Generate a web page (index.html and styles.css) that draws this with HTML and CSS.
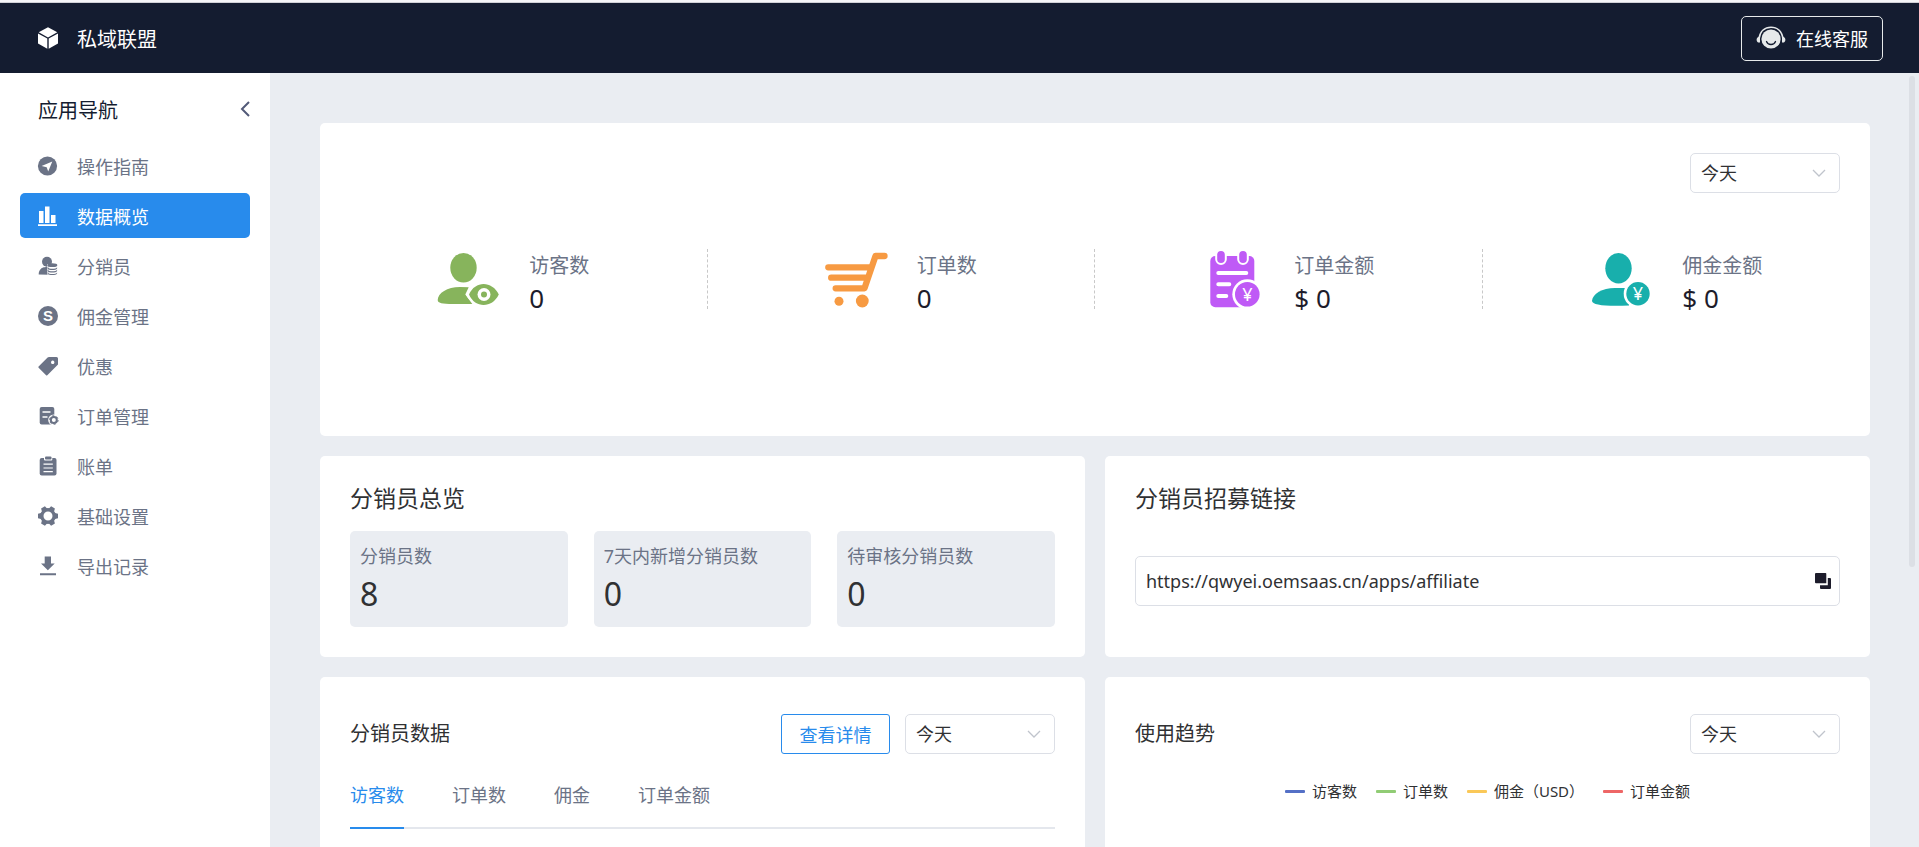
FILE: index.html
```html
<!DOCTYPE html>
<html lang="zh-CN">
<head>
<meta charset="utf-8">
<title>私域联盟</title>
<link rel="stylesheet" href="styles.css">
</head>
<body>
<header class="topbar">
  <div class="brand">
    <svg class="icon" viewBox="0 0 20 22" aria-hidden="true"><path fill="#fff" d="M10 .3 19.3 5.300 10 10.400.7 5.300ZM0 6.500l9.300 5v10.200L0 16.500ZM20 6.500l-9.300 5v10.200L20 16.500Z"/></svg>
    <span>私域联盟</span>
  </div>
  <button class="support" type="button">
    <svg class="support-icon" viewBox="0 0 30 24" aria-hidden="true"><circle cx="15" cy="13" r="9.600" fill="#e6e9ea"/><path d="M3 13C4 5 9 1.200 15 1.200S26 5 27 13" fill="none" stroke="#e6e9ea" stroke-width="1.600"/><path d="M4 10.500v6C1.800 17 .6 15.500.6 13.700S2 10.500 4 10.500ZM26 10.500v6c2.200.5 3.400-1 3.400-2.800S28 10.500 26 10.500Z" fill="#e6e9ea"/><path d="M10.500 15.500c1.500 4 7.500 4 9 0" fill="none" stroke="#141c30" stroke-width="1.300" stroke-linecap="round"/></svg>
    <span>在线客服</span>
  </button>
</header>
<div class="shell">
  <aside class="sidebar">
    <div class="sidebar-head">
      <h2 class="sidebar-title">应用导航</h2>
      <button class="collapse" type="button" aria-label="收起"><svg viewBox="0 0 10 16" width="10" height="16"><path d="M9 1 2 8l7 7" fill="none" stroke="#525a78" stroke-width="2"/></svg></button>
    </div>
    <nav class="menu">
      <a class="menu-item" href="#"><svg class="icon" viewBox="0 0 20 20"><circle cx="9.500" cy="10" r="9.600" fill="currentColor"/><path fill="#fff" d="M14.300 5.500 10.200 15.400 8.700 11.300 3.600 10Z"/></svg><span>操作指南</span></a>
      <a class="menu-item active" href="#"><svg class="icon" viewBox="0 0 20 20"><path fill="currentColor" d="M1 5h4.500v12H1ZM7 .5h4.500V17H7ZM13 9h4.500v8H13ZM0 18.200h19V20H0Z"/></svg><span>数据概览</span></a>
      <a class="menu-item" href="#"><svg class="icon" viewBox="0 0 20 20"><circle cx="9" cy="5.800" r="5" fill="currentColor"/><path fill="currentColor" d="M.7 18.500C.7 14 3.500 11.300 7 11.300l4-1.500v8.900Z"/><path d="M9 8v10c0 2.500 11 2.500 11 0V8Z" fill="#fff" fill-opacity=".75"/><ellipse cx="14.300" cy="9.200" rx="5" ry="1.900" fill="currentColor"/><path d="M9.600 11.200c1 2 8.600 2 9.500 0v1.200c-1 2-8.500 2-9.500 0ZM9.600 13.800c1 2 8.600 2 9.500 0V15c-1 2-8.500 2-9.500 0ZM9.600 16.400c1 2 8.600 2 9.500 0v1c-1 2-8.500 2-9.500 0Z" fill="currentColor"/></svg><span>分销员</span></a>
      <a class="menu-item" href="#"><svg class="icon" viewBox="0 0 20 20"><circle cx="10" cy="10" r="10" fill="currentColor"/><text x="10" y="15.200" class="coin-mark">S</text></svg><span>佣金管理</span></a>
      <a class="menu-item" href="#"><svg class="icon" viewBox="0 0 20 20"><path fill="currentColor" fill-rule="evenodd" d="M.6 10.500 9.600 1.500Q10.200 1 11 1h7.500Q20 1 20 2.500v6L9.300 19.200q-.6.500-1.200 0l-7.500-7.500q-.6-.6 0-1.200ZM14.700 4.600a1.700 1.700 0 1 0 .01 0Z"/></svg><span>优惠</span></a>
      <a class="menu-item" href="#"><svg class="icon" viewBox="0 0 20 20"><rect x="1.700" y="1" width="14.600" height="17.500" rx="2" fill="currentColor"/><path d="M4.500 6h8M4.500 11h5" stroke="#fff" stroke-width="1.600"/><circle cx="15.800" cy="14" r="5.600" fill="#fff"/><circle cx="15.800" cy="14" r="3" fill="none" stroke="currentColor" stroke-width="2"/><circle cx="15.800" cy="14" r="4.300" fill="none" stroke="currentColor" stroke-width="1" stroke-dasharray="2.250 2.250"/></svg><span>订单管理</span></a>
      <a class="menu-item" href="#"><svg class="icon" viewBox="0 0 20 20"><rect x="1.700" y="2" width="16.800" height="17.500" rx="2" fill="currentColor"/><path d="M6 1.500v2q0 1 1 1h6.300q1 0 1-1v-2Z" fill="#fff"/><rect x="7" y=".5" width="6.500" height="3" rx="1" fill="currentColor"/><path d="M5.500 8.200h9.300M5.500 12h9.300M5.500 15.600h9.300" stroke="#fff" stroke-width="1.200"/></svg><span>账单</span></a>
      <a class="menu-item" href="#"><svg class="icon" viewBox="0 0 20 20"><circle cx="10" cy="10" r="6.200" fill="none" stroke="currentColor" stroke-width="3.400"/><g fill="currentColor"><path d="M7.800 0h4.400l1 4H6.800Z" transform="rotate(30 10 10)"/><path d="M7.800 0h4.400l1 4H6.800Z" transform="rotate(90 10 10)"/><path d="M7.800 0h4.400l1 4H6.800Z" transform="rotate(150 10 10)"/><path d="M7.800 0h4.400l1 4H6.800Z" transform="rotate(210 10 10)"/><path d="M7.800 0h4.400l1 4H6.800Z" transform="rotate(270 10 10)"/><path d="M7.800 0h4.400l1 4H6.800Z" transform="rotate(330 10 10)"/></g></svg><span>基础设置</span></a>
      <a class="menu-item" href="#"><svg class="icon" viewBox="0 0 20 20"><path fill="currentColor" d="M6.700.5H13v7h3.700L9.850 14.200 3 7.500h3.700ZM2 17.200h16v2H2Z"/></svg><span>导出记录</span></a>
    </nav>
  </aside>
  <main class="content">
    <section class="card overview">
      <div class="select-box"><select class="select" aria-label="统计时间"><option>今天</option></select><svg class="caret" viewBox="0 0 14 8"><path d="M1 1l6 6 6-6" fill="none" stroke="#c0c4cc" stroke-width="1.300"/></svg></div>
      <div class="stats">
        <div class="stat">
          <svg class="stat-icon" viewBox="0 0 62 60" fill="#87b45c"><ellipse cx="26.500" cy="18.800" rx="13.200" ry="14.800"/><path d="M.7 51C1 44 10 38 23 38l8.700.3-3.400 7.200L35.300 55H16C5 55 .7 54 .7 51Z"/><path d="M29 45.500C36 30 57 30 64 45.500 57 61 36 61 29 45.500Z" fill="#fff"/><path d="M32 45.500C38 31.500 55 31.500 61.800 45.500 55 59.500 38 59.500 32 45.500Z"/><circle cx="47" cy="45.500" r="6.500" fill="#fff"/><circle cx="47" cy="45.500" r="3"/></svg>
          <div class="stat-text"><span class="stat-label">访客数</span><span class="stat-value">0</span></div>
        </div>
        <div class="stat">
          <svg class="stat-icon" viewBox="0 0 62 60" fill="none" stroke="#f79a42" stroke-width="6.300" stroke-linecap="round" stroke-linejoin="round"><path d="M3.300 18.300H45M6.200 28.700H41M10.700 39.300H39.500L50.500 7h9"/><circle cx="14" cy="52.300" r="4.500" fill="#f79a42" stroke="none"/><circle cx="37.300" cy="52" r="6.400" fill="#f79a42" stroke="none"/></svg>
          <div class="stat-text"><span class="stat-label">订单数</span><span class="stat-value">0</span></div>
        </div>
        <div class="stat">
          <svg class="stat-icon" viewBox="0 0 62 60" fill="#bf5af6"><rect x="8.300" y="7" width="44" height="51.300" rx="5"/><g stroke="#fff" stroke-width="4" paint-order="stroke"><rect x="15.200" y="2" width="7.600" height="12" rx="3.800"/><rect x="37.200" y="2" width="7.600" height="12" rx="3.800"/></g><path d="M16.300 24h28M16.300 35.300h11M16.300 47h8" stroke="#fff" stroke-width="4" stroke-linecap="round"/><circle cx="45.300" cy="45.300" r="15" fill="#fff"/><circle cx="45.300" cy="45.300" r="12.300"/><text x="45.300" y="52" class="yen">¥</text></svg>
          <div class="stat-text"><span class="stat-label">订单金额</span><span class="stat-value">$ 0</span></div>
        </div>
        <div class="stat">
          <svg class="stat-icon" viewBox="0 0 62 60" fill="#18afac"><ellipse cx="28.500" cy="19.300" rx="13.200" ry="15.300"/><path d="M2 51.700C2.500 45 12 39 25 39h14v17.500C15 57.500 2 56 2 51.700Z"/><circle cx="48" cy="44.700" r="14.300" fill="#fff"/><circle cx="48" cy="44.700" r="11.700"/><text x="48" y="51.400" class="yen">¥</text></svg>
          <div class="stat-text"><span class="stat-label">佣金金额</span><span class="stat-value">$ 0</span></div>
        </div>
      </div>
    </section>
    <div class="grid">
      <section class="card summary">
        <h3 class="card-title">分销员总览</h3>
        <div class="tiles">
          <div class="tile"><span class="tile-label">分销员数</span><span class="tile-value">8</span></div>
          <div class="tile"><span class="tile-label">7天内新增分销员数</span><span class="tile-value">0</span></div>
          <div class="tile"><span class="tile-label">待审核分销员数</span><span class="tile-value">0</span></div>
        </div>
      </section>
      <section class="card summary">
        <h3 class="card-title">分销员招募链接</h3>
        <div class="link-box">
          <input class="link-input" type="text" readonly aria-label="分销员招募链接" value="https://qwyei.oemsaas.cn/apps/affiliate">
          <button class="copy" type="button" aria-label="复制"><svg viewBox="0 0 16 16" width="16" height="16" fill="#1d1c2b"><path d="M1 0h9.500q.8 0 .8.800v9.500H1q-1 0-1-1V1q0-1 1-1ZM12.800 5H15q1 0 1 1v9q0 1-1 1H6q-1 0-1-1v-2.700h7.800Z"/></svg></button>
        </div>
      </section>
      <section class="card data">
        <div class="data-head">
          <h3 class="data-title">分销员数据</h3>
          <button class="detail" type="button">查看详情</button>
          <div class="select-box"><select class="select" aria-label="分销员数据时间"><option>今天</option></select><svg class="caret" viewBox="0 0 14 8"><path d="M1 1l6 6 6-6" fill="none" stroke="#c0c4cc" stroke-width="1.300"/></svg></div>
        </div>
        <div class="tabs" role="tablist">
          <button class="tab selected" role="tab" aria-selected="true" type="button">访客数</button>
          <button class="tab" role="tab" type="button">订单数</button>
          <button class="tab" role="tab" type="button">佣金</button>
          <button class="tab" role="tab" type="button">订单金额</button>
        </div>
      </section>
      <section class="card data">
        <div class="data-head">
          <h3 class="data-title">使用趋势</h3>
          <div class="select-box"><select class="select" aria-label="使用趋势时间"><option>今天</option></select><svg class="caret" viewBox="0 0 14 8"><path d="M1 1l6 6 6-6" fill="none" stroke="#c0c4cc" stroke-width="1.300"/></svg></div>
        </div>
        <ul class="legend">
          <li class="legend-item visitors">访客数</li>
          <li class="legend-item orders">订单数</li>
          <li class="legend-item commission">佣金（USD）</li>
          <li class="legend-item amount">订单金额</li>
        </ul>
      </section>
    </div>
    <div class="scroll-thumb"></div>
  </main>
</div>
</body>
</html>
```
FILE: styles.css
```css
* { box-sizing: border-box; }
body {
  margin: 0;
  height: 100vh;
  padding-top: 2px;
  display: flex;
  flex-direction: column;
  overflow: hidden;
  background: #f5f5f7;
  color: #303133;
  font-family: "Noto Sans", "Noto Sans CJK SC", sans-serif;
  font-size: 18px;
}
button, input, select { font: inherit; color: inherit; }
button { background: none; border: 0; padding: 0; cursor: pointer; }
h2, h3 { margin: 0; font-weight: 400; }

.topbar {
  flex: none;
  height: 71px;
  border-top: 1px solid #d0d0d6;
  padding: 0 36px 0 38px;
  display: flex;
  align-items: center;
  justify-content: space-between;
  background: #141c30;
  color: #fff;
}
.brand { display: flex; align-items: center; gap: 19px; font-size: 20px; }
.icon { flex: none; width: 20px; height: 20px; overflow: visible; }
.brand .icon { height: 22px; }
.support {
  display: flex;
  align-items: center;
  gap: 10px;
  height: 45px;
  padding: 0 14px;
  border: 1px solid #e6e9ea;
  border-radius: 5px;
  color: #fff;
}
.support-icon { width: 30px; height: 24px; }

.shell { flex: 1; min-height: 0; display: flex; }
.sidebar { flex: none; width: 270px; padding: 20px; background: #fff; }
.sidebar-head {
  display: flex;
  justify-content: space-between;
  align-items: flex-start;
  height: 36px;
  padding-left: 18px;
}
.sidebar-title { font-size: 20px; line-height: 36px; color: #141c30; }
.collapse { display: flex; padding-top: 8px; }
.menu { display: flex; flex-direction: column; gap: 5px; padding-top: 14px; }
.menu-item {
  display: flex;
  align-items: center;
  gap: 19px;
  height: 45px;
  padding: 0 18px;
  border-radius: 5px;
  color: #6b7386;
  text-decoration: none;
}
.menu-item.active { background: #288bec; color: #fff; }
.coin-mark { font: bold 15px "Liberation Sans", sans-serif; fill: #fff; text-anchor: middle; }

.content {
  position: relative;
  flex: 1;
  min-width: 0;
  overflow: hidden;
  padding: 50px 49px 0 50px;
  background: #eaedf2;
}
.scroll-thumb {
  position: absolute;
  top: 3px;
  right: 4px;
  width: 6px;
  height: 491px;
  border-radius: 3px;
  background: #dcdfe5;
}
.card { background: #fff; border-radius: 5px; padding: 30px; }
.overview {
  display: flex;
  flex-direction: column;
  align-items: flex-end;
  gap: 56px;
  padding: 30px 0 127px;
  margin-bottom: 20px;
}
.overview .select-box { margin-right: 30px; }
.select-box { position: relative; flex: none; width: 150px; height: 40px; }
.select {
  appearance: none;
  width: 100%;
  height: 100%;
  padding: 0 10px;
  border: 1px solid #dcdfe6;
  border-radius: 5px;
  background: #fff;
}
.caret { position: absolute; right: 14px; top: 16px; width: 14px; height: 8px; pointer-events: none; }
.stats { width: 100%; display: grid; grid-template-columns: repeat(4, 1fr); }
.stat {
  display: flex;
  justify-content: center;
  gap: 30px;
  height: 60px;
  border-right: 1px dashed #c8c8c8;
}
.stat:last-child { border-right: 0; }
.stat-icon { width: 62px; height: 60px; overflow: visible; }
.stat-text { display: flex; flex-direction: column; }
.stat-label { font-size: 20px; line-height: 34px; color: #6b7386; }
.stat-value { font-size: 26px; line-height: 30px; color: #1d1c2b; }
.yen { font: 18px "Noto Sans", sans-serif; fill: #fff; text-anchor: middle; }

.grid { display: grid; grid-template-columns: 1fr 1fr; gap: 20px; }
.summary { display: flex; flex-direction: column; }
.card-title { font-size: 23px; line-height: 24px; }
.tiles { display: grid; grid-template-columns: repeat(3, 1fr); gap: 26px; padding-top: 21px; }
.tile {
  display: flex;
  flex-direction: column;
  padding: 9px 10px 11px;
  border-radius: 5px;
  background: #eaedf2;
}
.tile-label { line-height: 32px; color: #6b7386; }
.tile-value { font-size: 32px; line-height: 44px; }
.link-box {
  display: flex;
  align-items: center;
  height: 50px;
  margin-top: 46px;
  padding: 0 8px 0 10px;
  border: 1px solid #dcdfe6;
  border-radius: 5px;
}
.link-input { flex: 1; min-width: 0; padding: 0; border: 0; outline: 0; background: none; }
.copy { display: flex; }

.data { height: 460px; padding-top: 37px; }
.data-head { display: flex; align-items: center; gap: 15px; height: 40px; }
.data-title { flex: 1; font-size: 20px; line-height: 38px; }
.detail {
  width: 109px;
  height: 40px;
  border: 1px solid #288bec;
  border-radius: 3px;
  color: #288bec;
}
.tabs { display: flex; gap: 48px; margin-top: 10px; border-bottom: 2px solid #e4e7ed; }
.tab {
  height: 65px;
  margin-bottom: -2px;
  padding-bottom: 4px;
  border-bottom: 2px solid transparent;
  color: #6b7386;
}
.tab.selected { color: #288bec; border-bottom-color: #288bec; }
.legend {
  display: flex;
  justify-content: center;
  gap: 19px;
  margin: 25px 0 0;
  padding: 0;
  list-style: none;
  font-size: 15px;
  line-height: 24px;
}
.legend-item { display: flex; align-items: center; gap: 7px; }
.legend-item::before { content: ""; width: 20px; height: 3px; border-radius: 1px; background: currentColor; }
.legend-item.visitors::before { background: #5470c6; }
.legend-item.orders::before { background: #91cc75; }
.legend-item.commission::before { background: #fac858; }
.legend-item.amount::before { background: #ee6666; }
```
